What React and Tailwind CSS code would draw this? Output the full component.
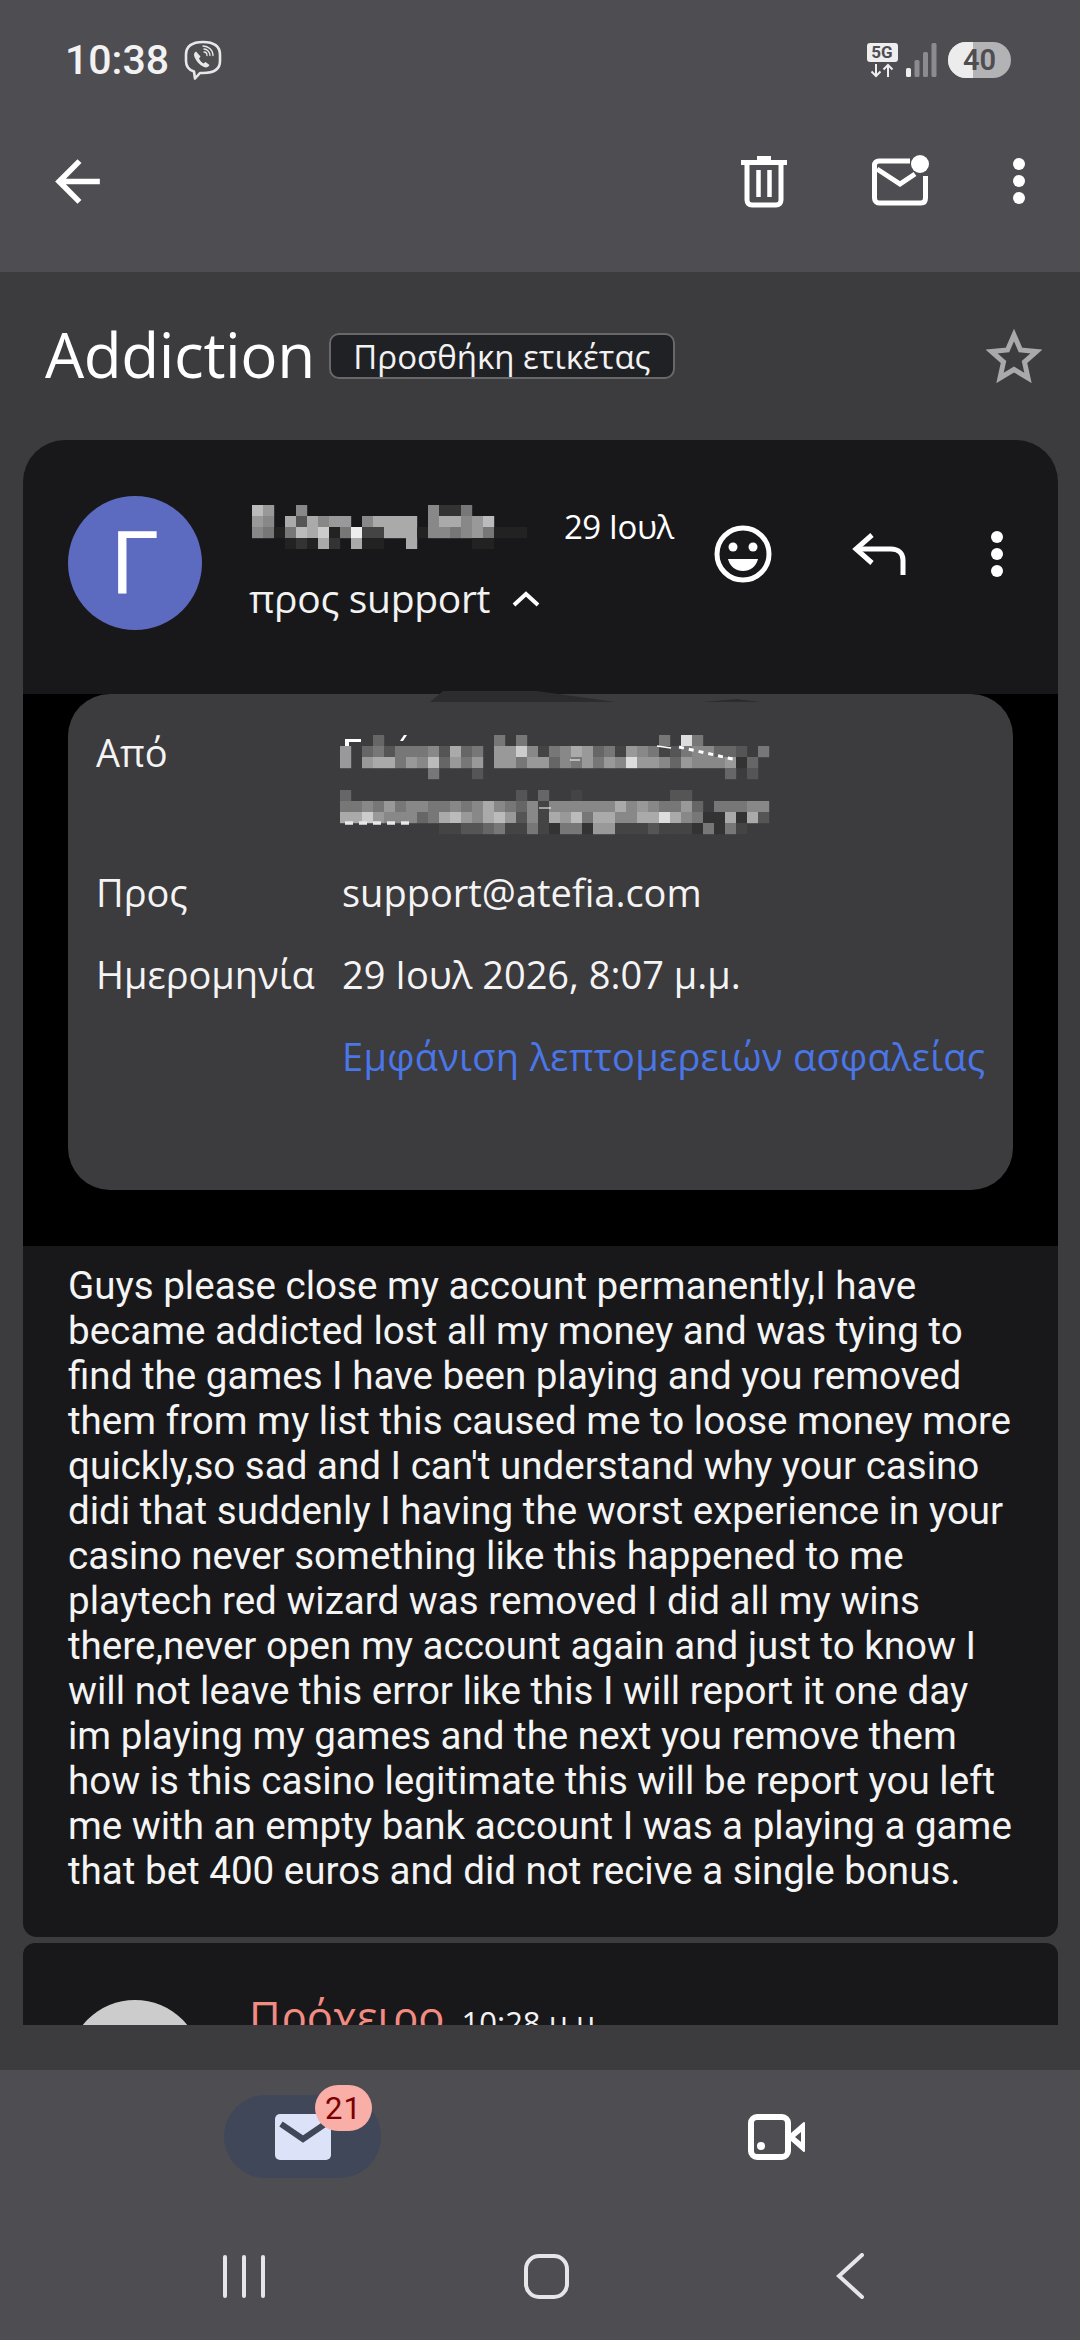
const G = "[font-family:'Open_Sans',sans-serif]";

const body = [
  "Guys please close my account permanently,I have",
  "became addicted lost all my money and was tying to",
  "find the games I have been playing and you removed",
  "them from my list this caused me to loose money more",
  "quickly,so sad and I can't understand why your casino",
  "didi that suddenly I having the worst experience in your",
  "casino never something like this happened to me",
  "playtech red wizard was removed I did all my wins",
  "there,never open my account again and just to know I",
  "will not leave this error like this I will report it one day",
  "im playing my games and the next you remove them",
  "how is this casino legitimate this will be report you left",
  "me with an empty bank account I was a playing a game",
  "that bet 400 euros and did not recive a single bonus.",
];

function Mosaic({ rows, w, h, children, className = "" }) {
  const cells = [];
  rows.forEach((r, y) =>
    [...r].forEach((c, x) => {
      if (c === ".") return;
      const g = parseInt(c, 16) * 17;
      cells.push(<rect key={`${x}-${y}`} x={x * 11} y={y * 11} width="11.2" height="11.2" fill={`rgb(${g},${g},${g})`} />);
    })
  );
  return (
    <svg width={w} height={h} viewBox={`0 0 ${w} ${h}`} className={`block ${className}`}>
      {cells}
      {children}
    </svg>
  );
}

const nameRows = [
  "b9..8...........8337",
  "98.a5a899.8aaaa.8aa89b",
  "8727bac27e44aaa2887897222",
  "...232a3.a22..a.....22",
];
const mailRows = [
  "...6..........7.7............7.d7",
  "9.67577785a67.99c8478a967498745788665.7",
  "9.9aa798b6979.99799687979 8d99869888936".replace(" ", ""),
  "........7...5......................6.5",
  "",
  "6...............5.6..4........55",
  "7787978877878a87684888888a8987796.77788",
  "aac988867ab98ab9584a9b7aa88aada8733a3a5",
  ".........4455674474377399444544437374",
];

function Dots({ r = 6, gap = 17, fill = "#fff" }) {
  return (
    <svg width={r * 2 + 2} height={gap * 2 + r * 2 + 2} viewBox={`0 0 ${r * 2 + 2} ${gap * 2 + r * 2 + 2}`}>
      {[0, 1, 2].map((i) => (
        <circle key={i} cx={r + 1} cy={r + 1 + i * gap} r={r} fill={fill} />
      ))}
    </svg>
  );
}

function StatusBar() {
  return (
    <div className="flex items-center justify-between h-[118px] pl-[65px] pr-[69px] pt-[2px]">
      <div className="flex items-center gap-[15px]">
        <span className="text-[41px] leading-none font-medium text-[#f2f2f2] [font-family:Roboto,sans-serif]">10:38</span>
        <svg width="38" height="40" viewBox="0 0 38 40" fill="none" stroke="#e8e8e8" strokeWidth="2.6">
          <path d="M10 31.500C5 30 2 27 2 21v-6C2 6 8 2 19 2s17 4 17 13v6c0 8-6 12-17 12h-3l-5 5.500z" strokeLinejoin="round" />
          <path d="M12 11.500c-2 1-2.500 3-1.500 5.500 2 4.500 5 8 9.500 10 2.500 1 4.500 0 5.500-2l-4-3-2 1.500c-2-1-3.500-3-4.500-5l1.500-2z" fill="#e8e8e8" stroke="none" />
          <path d="M20 9c3 0 6 3 6 6.500M20 12c2 0 3 1.500 3 3.500M19 6c5.500 0 10 4 10 9.500" strokeWidth="1.300" strokeLinecap="round" />
        </svg>
      </div>
      <div className="flex items-center gap-[7px]">
        <div className="flex flex-col items-center w-[32px]">
          <span className="w-[31px] h-[19px] bg-[#eeeeee] rounded-[3px] text-[#4e4d52] text-[17px] leading-[19px] font-bold text-center [font-family:Roboto,sans-serif]">5G</span>
          <svg width="24" height="15" viewBox="0 0 24 15" fill="none" stroke="#eee" strokeWidth="2" className="mt-[1px]">
            <path d="M6 1v12M1.500 8.500L6 13l4.500-4.500M18 14V2M13.500 6.500L18 2l4.500 4.500" />
          </svg>
        </div>
        <svg width="32" height="34" viewBox="0 0 32 34">
          <rect x="1" y="25" width="5" height="9" rx="1.500" fill="#eee" />
          <rect x="9.500" y="17" width="5" height="17" rx="1.500" fill="#8c8c8f" />
          <rect x="18" y="9" width="5" height="25" rx="1.500" fill="#8c8c8f" />
          <rect x="26.500" y="0" width="5" height="34" rx="1.500" fill="#8c8c8f" />
        </svg>
        <div className="relative w-[63px] h-[36px] rounded-full overflow-hidden bg-[#b3b3b5] ml-[4px] flex items-center justify-center">
          <div className="absolute left-0 top-0 bottom-0 w-[25px] bg-[#ececec]" />
          <span className="relative text-[29px] font-semibold text-[#4e4d52] leading-none [font-family:Roboto,sans-serif]">40</span>
        </div>
      </div>
    </div>
  );
}

function Toolbar() {
  return (
    <div className="flex items-center h-[94px] pl-[44px] pr-[54px] mt-[16px]">
      <svg width="67" height="67" viewBox="0 0 24 24" fill="#fff">
        <path d="M20 11H7.830l5.590-5.590L12 4l-8 8 8 8 1.410-1.410L7.830 13H20v-2z" />
      </svg>
      <div className="flex-1" />
      <svg width="46" height="54" viewBox="0 0 46 54" fill="none" className="mr-[85px]">
        <path d="M16 2h14v4h16v5H0V6h16z" fill="#fff" />
        <path d="M6 9v37c0 3 2 5 5 5h24c3 0 5-2 5-5V9" stroke="#fff" strokeWidth="5" />
        <path d="M17.500 16v27M28.500 16v27" stroke="#fff" strokeWidth="4.500" />
      </svg>
      <svg width="58" height="52" viewBox="0 0 58 52" fill="none" className="mr-[82px]">
        <path d="M38 6H7C4 6 2.500 8 2.500 10v33c0 3 2 5 4.500 5h42c3 0 4.500-2 4.500-5V21" stroke="#fff" strokeWidth="5" />
        <path d="M5 14l23 15 15-10" stroke="#fff" strokeWidth="5" />
        <circle cx="48" cy="9" r="9" fill="#fff" />
      </svg>
      <Dots />
    </div>
  );
}

function Title() {
  return (
    <div className="flex items-center h-[168px] pl-[45px] pr-[38px] shrink-0">
      <span className={`${G} text-[62px] leading-none text-white tracking-[-0.4px] mt-[-4px]`}>Addiction</span>
      <div className={`${G} ml-[14px] w-[346px] h-[46px] rounded-[10px] bg-[#202125] border-2 border-[#68686b] flex items-center justify-center text-[33px] text-[#f2f2f2] leading-none whitespace-nowrap`}>
        Προσθήκη ετικέτας
      </div>
      <div className="flex-1" />
      <svg width="56" height="54" viewBox="0 0 56 54" fill="none" stroke="#a9a9ab" strokeWidth="5" className="mt-[-1px]">
        <path d="M28 6l6.500 15 16 1.500-12 10.500 3.500 16L28 40.500 14 49l3.500-16-12-10.500 16-1.500z" strokeLinejoin="miter" />
      </svg>
    </div>
  );
}

function CardHeader() {
  return (
    <div className="flex items-start h-[254px] bg-[#18181b] rounded-t-[42px] pl-[45px] pt-[56px] shrink-0">
      <div className="w-[134px] h-[134px] rounded-full bg-[#5c6bc0] flex items-center justify-center text-white text-[88px] leading-none [font-family:Roboto,sans-serif] shrink-0">Γ</div>
      <div className="ml-[47px] w-[428px]">
        <div className="flex items-start h-[44px] mt-[9px]">
          <Mosaic rows={nameRows} w={286} h={44} className="ml-[3px]" />
          <span className={`${G} ml-[26px] text-[33px] leading-[40px] text-white tracking-[-0.5px] whitespace-nowrap mt-[2px]`}>29 Ιουλ</span>
        </div>
        <div className="flex items-center mt-[26px]">
          <span className={`${G} text-[39px] leading-[46px] text-[#f2f2f2] tracking-[-0.3px] whitespace-nowrap`}>προς support</span>
          <svg width="28" height="16" viewBox="0 0 28 16" fill="none" stroke="#fff" strokeWidth="4" className="ml-[22px] mt-[2px]">
            <path d="M2 14L14 3l12 11" />
          </svg>
        </div>
      </div>
      <div className="flex items-center ml-[36px] mt-[28px]">
        <svg width="60" height="60" viewBox="0 0 60 60">
          <circle cx="30" cy="30" r="26" fill="none" stroke="#fff" strokeWidth="5" />
          <circle cx="20" cy="23" r="4.500" fill="#fff" />
          <circle cx="40" cy="23" r="4.500" fill="#fff" />
          <path d="M15 35h30c-2 8-8 12-15 12s-13-4-15-12z" fill="#fff" />
        </svg>
        <svg width="54" height="42" viewBox="0 0 54 42" fill="none" stroke="#fff" strokeWidth="5" className="ml-[79px]">
          <path d="M20 2L4 16l16 14" />
          <path d="M5 16h34c7 0 12 4 12 11v15" />
        </svg>
        <div className="ml-[84px]"><Dots /></div>
      </div>
    </div>
  );
}

function Row({ label, children, className = "" }) {
  return (
    <div className={`flex ${className}`}>
      <div className="w-[246px] shrink-0 whitespace-nowrap">{label}</div>
      {children}
    </div>
  );
}

function Details() {
  return (
    <div className="relative h-[552px] bg-black px-[45px] shrink-0">
      <div className={`${G} h-[496px] bg-[#3c3b3e] rounded-[42px] pt-[34px] px-[28px] text-[38px] leading-[48px] text-[#f4f4f4] flex flex-col gap-[34px]`}>
        <Row label="Από" className="h-[106px]">
          <Mosaic rows={mailRows} w={440} h={100} className="mt-[7px] ml-[-2px]">
            <path d="M5 4h16v3H9v4H5z" fill="#fff" />
            <path d="M64 0l-4 6h3l4-6z" fill="#fff" />
            <path d="M317 11l14 2" stroke="#fff" strokeWidth="1.500" />
            <path d="M339 12l58 13" stroke="#fff" strokeWidth="3" strokeDasharray="5 5" />
            <path d="M230 25h10M199 73h12" stroke="#fff" strokeWidth="1.200" />
            <path d="M5 88h68" stroke="#e8e8e8" strokeWidth="3.500" strokeDasharray="8 6" />
          </Mosaic>
        </Row>
        <Row label="Προς">support@atefia.com</Row>
        <Row label="Ημερομηνία">29 Ιουλ 2026, 8:07 μ.μ.</Row>
        <Row label="">
          <span className="text-[#4a76e8] whitespace-nowrap tracking-[0.3px]">Εμφάνιση λεπτομερειών ασφαλείας</span>
        </Row>
      </div>
      <svg width="340" height="12" viewBox="0 0 340 12" className="absolute left-[407px] top-[-3px]">
        <path d="M0 11L13 0h94l78 11z" fill="#2c2c2e" />
        <path d="M273 11l34-3 23 3z" fill="#2c2c2e" />
      </svg>
    </div>
  );
}

function NextCard() {
  return (
    <div className="mt-[6px] h-[82px] bg-[#18181b] rounded-t-[12px] overflow-hidden pl-[45px] pt-[57px] flex items-start shrink-0">
      <div className="w-[134px] h-[134px] rounded-full bg-[#cccccc] shrink-0" />
      <span className={`${G} ml-[47px] text-[43.500px] leading-[48px] font-medium text-[#f28b82] whitespace-nowrap mt-[-7px]`}>Πρόχειρο</span>
      <span className={`${G} ml-[17px] text-[31px] leading-[40px] text-[#f2f2f2] whitespace-nowrap mt-[2px]`}>10:28 μ.μ.</span>
    </div>
  );
}

function BottomNav() {
  return (
    <div className="h-[270px] bg-[#4e4d52] shrink-0 flex flex-col">
      <div className="flex h-[150px] pt-[25px]">
        <div className="relative ml-[224px] w-[157px] h-[83px] rounded-full bg-[#3f4758] flex items-center justify-center">
          <svg width="56" height="46" viewBox="0 0 56 46">
            <rect width="56" height="46" rx="5" fill="#dce3f9" />
            <path d="M6 10l22 15 22-15" fill="none" stroke="#3f4758" strokeWidth="6" />
          </svg>
          <div className="absolute left-[91px] top-[-10px] w-[57px] h-[46px] rounded-full bg-[#f9aea8] flex items-center justify-center text-[#7d0000] text-[31px] leading-none tracking-[1px] [font-family:Roboto,sans-serif]">21</div>
        </div>
        <svg width="58" height="46" viewBox="0 0 58 46" fill="none" className="ml-[367px] mt-[19px]">
          <rect x="3" y="3" width="37" height="40" rx="6" stroke="#fff" strokeWidth="6" />
          <circle cx="13" cy="32" r="4" fill="#fff" />
          <path d="M40 23L56 9v28z" fill="#fff" stroke="#fff" strokeWidth="2" strokeLinejoin="round" />
          <path d="M47 23l6-5v10z" fill="#4e4d52" />
        </svg>
      </div>
      <div className="flex items-center h-[48px] mt-[32px]">
        <div className="flex ml-[223px] gap-[15px]">
          <div className="w-[4px] h-[43px] rounded-full bg-[#e6e6e8]" />
          <div className="w-[4px] h-[43px] rounded-full bg-[#e6e6e8]" />
          <div className="w-[4px] h-[43px] rounded-full bg-[#e6e6e8]" />
        </div>
        <div className="ml-[259px] w-[45px] h-[45px] rounded-[15px] border-[4px] border-[#e6e6e8]" />
        <svg width="30" height="46" viewBox="0 0 30 46" fill="none" stroke="#e6e6e8" strokeWidth="4" strokeLinecap="round" className="ml-[266px]">
          <path d="M27 2L4 23l23 21" />
        </svg>
      </div>
    </div>
  );
}

export default function App() {
  return (
    <div className="w-[1080px] h-[2340px] overflow-hidden bg-[#3c3b3e] flex flex-col [font-family:Roboto,sans-serif]">
      <div className="h-[272px] bg-[#4e4d52] shrink-0">
        <StatusBar />
        <Toolbar />
      </div>
      <Title />
      <div className="ml-[23px] mr-[22px] flex flex-col relative">
        <CardHeader />
        <Details />
        <div className="h-[691px] bg-[#18181b] rounded-b-[14px] pl-[45px] pt-[17px] text-[38.550px] leading-[45px] text-[#f4f4f4] shrink-0">
          {body.map((l) => (
            <div key={l} className="whitespace-nowrap">{l}</div>
          ))}
        </div>
        <NextCard />
      </div>
      <div className="flex-1" />
      <BottomNav />
    </div>
  );
}
